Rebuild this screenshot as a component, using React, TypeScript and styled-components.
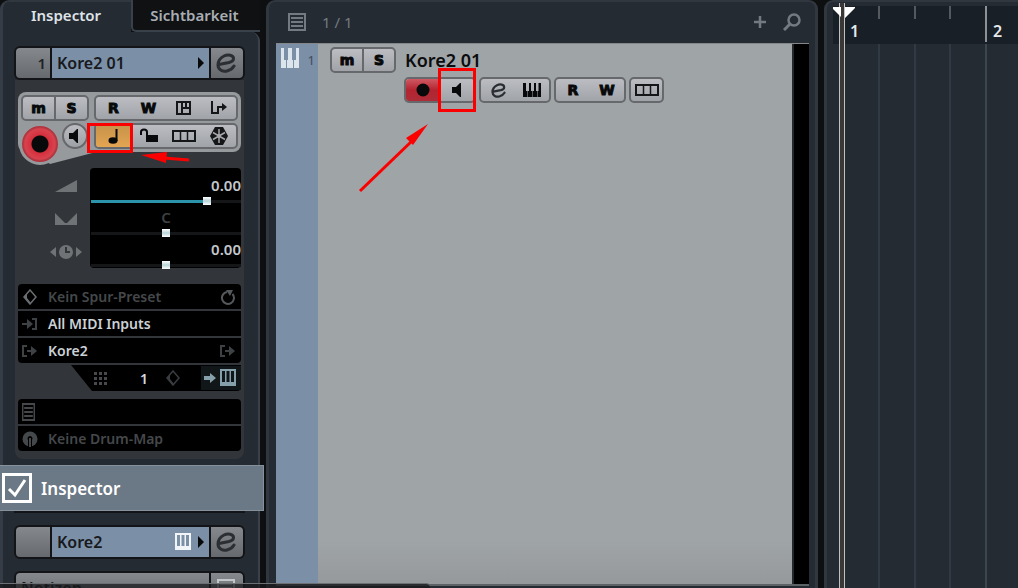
import React from 'react';
import styled, { createGlobalStyle, css } from 'styled-components';

const GlobalStyle = createGlobalStyle`
  *, *::before, *::after { box-sizing: border-box; }
  body {
    margin: 0;
    background: #0d0f10;
    font-family: 'Noto Sans', 'Open Sans', sans-serif;
    color: #d4dae0;
  }
  button, input { font: inherit; color: inherit; margin: 0; padding: 0; }
  button { border: 0; background: none; display: flex; align-items: center; justify-content: center; }
  svg { display: block; flex: none; }
`;

/* ---------- frame ---------- */

const Window = styled.div`
  position: relative;
  display: flex;
  gap: 6px;
  height: 100vh;
  overflow: hidden;
`;

const Sidebar = styled.aside`
  flex: none;
  width: 260px;
  display: flex;
  flex-direction: column;
`;

const Tabs = styled.div`
  display: flex;
  height: 32px;
  flex: none;
`;

const Tab = styled.button<{ $active?: boolean }>`
  height: 32px;
  font-size: 15px;
  font-weight: 600;
  ${(p) =>
    p.$active
      ? css`
          width: 131px;
          padding: 0 2px 4px 0;
          background: #252b33;
          border-top: 2px solid #30373f;
          border-left: 3px solid #353c46;
          border-top-left-radius: 9px;
          color: #dfe3e8;
        `
      : css`
          flex: 1;
          padding-right: 4px;
          border-left: 2px solid #39414a;
          border-bottom: 2px solid #39414a;
          border-bottom-left-radius: 5px;
          background: #0f1112;
          color: #a9aeb5;
        `}
`;

const InspectorPanel = styled.div`
  flex: 1;
  display: flex;
  flex-direction: column;
  padding: 14px 13px 0 11px;
  background: #252b33;
  border-left: 3px solid #353c46;
  border-right: 2px solid #39414a;
  border-top-right-radius: 9px;
`;

/* ---------- title bars ---------- */

const TitleBar = styled.div`
  display: flex;
  flex: none;
  height: 34px;
  border: 2px solid #121417;
  border-radius: 6px;
  overflow: hidden;
  background: #121417;
  gap: 2px;
  color: #17191c;
  font-size: 16px;
  font-weight: 600;
`;

const NotesBar = styled(TitleBar)`
  margin-top: 12px;
`;

const BarCap = styled.button<{ $wide?: boolean }>`
  width: ${(p) => (p.$wide ? 34 : 32)}px;
  justify-content: ${(p) => (p.$wide ? 'flex-end' : 'center')};
  padding-right: ${(p) => (p.$wide ? 4 : 2)}px;
  background: linear-gradient(#85888c, #66696d);
  color: #202327;
  font-size: 15px;
`;

const BarName = styled.button<{ $plain?: boolean }>`
  flex: 1;
  justify-content: space-between;
  padding: 0 4px 0 5px;
  background: ${(p) => (p.$plain ? 'linear-gradient(#85888c, #66696d)' : '#7b8fa7')};
`;

const BarIcons = styled.span`
  display: flex;
  align-items: center;
  gap: 6px;
`;

/* ---------- inspector body ---------- */

const Section = styled.div`
  flex: none;
  display: flex;
  flex-direction: column;
  margin: 0 1px;
  padding: 12px 3px 8px;
  background: #323539;
  border-radius: 0 0 8px 8px;
`;

const Cluster = styled.div`
  position: relative;
  display: grid;
  grid-template-columns: 68px 1fr;
  gap: 2px 5px;
  padding: 3px;
  background: #979a9d;
  border-radius: 8px;
  margin-bottom: 16px;
  &::before {
    content: '';
    position: absolute;
    left: 0;
    top: 40px;
    width: 86px;
    height: 34px;
    background: #979a9d;
    clip-path: polygon(0 0, 100% 0, 100% 18px, 32px 32px, 14px 20px);
  }
`;

const ButtonGroup = styled.div`
  position: relative;
  display: flex;
  height: 26px;
  border: 2px solid #66686c;
  border-radius: 5px;
  background: linear-gradient(#bbbdc2, #a0a3a8);
  overflow: hidden;
`;

const Cell = styled.button<{ $tone?: 'record' | 'accent'; $divided?: boolean }>`
  flex: 1;
  color: #08090a;
  font-family: 'DejaVu Sans', sans-serif;
  font-weight: 700;
  font-size: 14px;
  line-height: 16px;
  -webkit-text-stroke: 1px #08090a;
  ${(p) => p.$divided && css`border-left: 2px solid #66686c;`}
  ${(p) => p.$tone === 'record' && css`background: linear-gradient(#cf5963, #b32430 50%, #ad2d38);`}
  ${(p) => p.$tone === 'accent' && css`background: linear-gradient(#c6924a, #e3a552);`}
`;

const RecordRow = styled.div`
  position: relative;
  display: flex;
  align-items: flex-start;
  gap: 1px;
  height: 26px;
`;

const RecordButton = styled.button`
  flex: none;
  width: 42px;
  height: 42px;
  margin-left: -2px;
  border: 3px solid #979a9d;
  border-radius: 50%;
  background: radial-gradient(circle, #08090a 8px, #d42f3c 9px, #d8434e 15px, #b0353f 17px);
`;

const MonitorButton = styled.button`
  flex: none;
  width: 26px;
  height: 26px;
  padding-right: 2px;
  border: 2px solid #66686c;
  border-radius: 50%;
  background: linear-gradient(#babcc1, #9da0a5);
`;

const Faders = styled.div`
  display: flex;
  margin-bottom: 16px;
`;

const FaderIcons = styled.div`
  width: 72px;
  display: flex;
  flex-direction: column;
  align-items: center;
  padding: 1px 0 0 24px;
`;

const FaderIcon = styled.span`
  display: flex;
  height: 33px;
  align-items: center;
`;

const FaderBox = styled.div`
  flex: 1;
  height: 100px;
  padding: 5px 0 0 1px;
  background: #000;
  border-radius: 4px;
`;

const FaderRow = styled.label<{ $dim?: boolean }>`
  display: flex;
  flex-direction: column;
  height: 32px;
  font-size: 15px;
  font-weight: 600;
  line-height: 24px;
  text-align: ${(p) => (p.$dim ? 'center' : 'right')};
  color: ${(p) => (p.$dim ? '#3d4043' : '#c3c7cc')};
`;

const Slider = styled.input<{ $fill?: boolean }>`
  appearance: none;
  width: 100%;
  height: 8px;
  background: linear-gradient(
      to right,
      ${(p) => (p.$fill ? '#2b93aa' : '#151618')} 78%,
      #151618 78%
    )
    center / 100% 3px no-repeat;
  &::-webkit-slider-thumb {
    appearance: none;
    width: 8px;
    height: 8px;
    background: linear-gradient(#fff, #b9d4d9 50%, #fff);
  }
`;

const Slots = styled.div`
  display: flex;
  flex-direction: column;
  gap: 2px;
  background: #323539;
  border-radius: 4px;
  overflow: hidden;
`;

const Slot = styled.button<{ $dim?: boolean }>`
  height: 25px;
  justify-content: flex-start;
  gap: 10px;
  padding: 0 5px 0 4px;
  background: #000;
  font-size: 14px;
  font-weight: 600;
  color: ${(p) => (p.$dim ? '#45484b' : '#ccd1d6')};
`;

const SlotLabel = styled.span`
  flex: 1;
  text-align: left;
`;

const ChannelRow = styled.div`
  display: flex;
  align-items: center;
  align-self: flex-end;
  width: 170px;
  height: 26px;
  margin: 2px 0 8px;
  padding-left: 23px;
  background: #000;
  border-radius: 0 0 4px 0;
  clip-path: polygon(0 0, 100% 0, 100% 100%, 21px 100%);
  font-size: 14px;
  font-weight: 600;
`;

const ChannelValue = styled.button`
  width: 58px;
  padding-left: 16px;
`;

const ChannelOut = styled.button`
  width: 40px;
  height: 24px;
  margin-left: auto;
  padding-right: 3px;
  gap: 3px;
  background: #111719;
`;

/* ---------- floating section chooser ---------- */

const ChooserSlot = styled.div`
  position: relative;
  flex: none;
  height: 54px;
  margin: 0 0 12px;
  border-bottom: 2px solid #121417;
`;

const Chooser = styled.label`
  position: absolute;
  z-index: 2;
  left: -14px;
  top: 6px;
  width: 264px;
  height: 46px;
  display: flex;
  align-items: center;
  gap: 9px;
  padding-left: 2px;
  background: #6b7885;
  border: 1px solid #85929e;
  border-left: 0;
  color: #fff;
  font-size: 17px;
  font-weight: 600;
`;

const CheckWrap = styled.span`
  display: grid;
  & > * { grid-area: 1 / 1; }
`;

const Check = styled.input`
  appearance: none;
  width: 30px;
  height: 30px;
  border: 3px solid #fff;
`;

/* ---------- track list ---------- */

const TrackPanel = styled.main`
  flex: 0 1 552px;
  display: flex;
  flex-direction: column;
  min-width: 0;
  padding: 0 6px 2px 7px;
  background: #252b33;
  border: solid #30373f;
  border-width: 2px 3px 0 3px;
  border-radius: 9px 9px 0 0;
`;

const TrackHeader = styled.header`
  display: flex;
  align-items: center;
  gap: 16px;
  height: 41px;
  flex: none;
  padding: 0 8px 2px 12px;
  color: #747a81;
  font-size: 15px;
`;

const HeaderSpacer = styled.span`
  flex: 1;
`;

const HeaderButton = styled.button`
  color: #747a81;
`;

const TrackArea = styled.div`
  flex: 1;
  display: flex;
  border-top: 1px solid #83878b;
  border-bottom: 2px solid #5d6267;
`;

const TrackStrip = styled.div`
  display: flex;
  flex: none;
  width: 42px;
  padding: 4px 3px 0 4px;
  justify-content: space-between;
  background: #7b8fa7;
  font-size: 13px;
  line-height: 24px;
  color: #414c5a;
`;

const TrackBody = styled.div`
  flex: 1;
  display: flex;
  align-items: flex-start;
  gap: 8px;
  padding: 3px 0 0 12px;
  background: linear-gradient(#9fa4a7 92%, #96999c);
`;

const TrackGutter = styled.div`
  flex: none;
  width: 17px;
  background: #000;
  border-left: 2px solid #26292c;
`;

const MuteSolo = styled.div`
  flex: none;
  width: 66px;
`;

const TrackMain = styled.div`
  display: flex;
  flex-direction: column;
  gap: 4px;
`;

const TrackName = styled.h1`
  margin: 0;
  padding-left: 1px;
  font-size: 18px;
  line-height: 26px;
  font-weight: 600;
  color: #0b0c0e;
`;

const TrackTools = styled.div`
  display: grid;
  grid-template-columns: 72px 72px 72px 35px;
  gap: 3px;
`;

/* ---------- timeline ---------- */

const Timeline = styled.section`
  position: relative;
  flex: 1 0 194px;
  min-width: 0;
  display: flex;
  flex-direction: column;
  padding: 4px 0 0 6px;
  background: #252b33;
  border: solid #30373f;
  border-width: 2px 0 0 3px;
  border-top-left-radius: 9px;
  overflow: hidden;
`;

const Ruler = styled.div`
  display: flex;
  flex: none;
  height: 38px;
  padding-left: 9px;
  background: #181f27;
  overflow: hidden;
`;

const Lane = styled.div`
  display: flex;
  flex: 1;
  padding-left: 9px;
  overflow: hidden;
`;

const Bar = styled.div`
  position: relative;
  flex: none;
  display: grid;
  grid-template-columns: repeat(4, 1fr);
  width: 143px;
`;

const Tick = styled.span<{ $major?: boolean }>`
  width: 2px;
  height: ${(p) => (p.$major ? 36 : 13)}px;
  background: ${(p) => (p.$major ? '#8d9196' : '#54595f')};
`;

const BarNumber = styled.span`
  position: absolute;
  left: 8px;
  top: 15px;
  font-size: 16px;
  line-height: 20px;
  font-weight: 600;
  color: #e4e8ec;
`;

const GridLine = styled.span<{ $major?: boolean }>`
  width: 2px;
  background: ${(p) => (p.$major ? '#3b464f' : '#313a44')};
`;

const Playhead = styled.div`
  position: absolute;
  left: 12px;
  top: 1px;
  bottom: 0;
  width: 6px;
  border: solid #bfc2c5;
  border-width: 0 1px;
  background: #3a3735;
  & > svg { margin-left: -7px; }
`;

/* ---------- overlays ---------- */

const Marker = styled.div`
  position: absolute;
  border: 3px solid #fb0000;
  pointer-events: none;
`;

const NoteMarker = styled(Marker)`
  left: 87px;
  top: 123px;
  width: 46px;
  height: 30px;
`;

const MonitorMarker = styled(Marker)`
  left: 438px;
  top: 68px;
  width: 38px;
  height: 44px;
`;

const Arrows = styled.svg`
  position: absolute;
  left: 0;
  top: 0;
  pointer-events: none;
`;

const StatusEdge = styled.div`
  position: absolute;
  z-index: 3;
  left: 0;
  bottom: 0;
  width: 430px;
  height: 5px;
  background: rgba(24, 26, 28, 0.75);
  border-top: 1px solid #6d7073;
  border-top-right-radius: 4px;
`;

/* ---------- icons ---------- */

const EditIcon = ({ size = 20 }: { size?: number }) => (
  <svg width={size} height={size} viewBox="0 0 20 20" fill="none" stroke="#2b2e32" strokeWidth="3" strokeLinecap="round">
    <path d="M3 11.500L13 9.500C16 8.800 17.500 7.500 17.500 5.500C17.500 2 12 1 8 3C4 5 2 8 2 12C2 17 7 19 11 18C14 17.300 16.500 15.500 18 13" />
  </svg>
);

const Triangle = () => (
  <svg width="8" height="14" viewBox="0 0 8 14"><path d="M1 1l6 6-6 6z" fill="#08090a" /></svg>
);

const SpeakerIcon = () => (
  <svg width="10" height="14" viewBox="0 0 10 14"><path d="M0 4h4l4-4h1v14H8l-4-4H0z" fill="#08090a" /></svg>
);

const DotIcon = () => (
  <svg width="14" height="14" viewBox="0 0 14 14"><circle cx="7" cy="7" r="6.500" fill="#08090a" /></svg>
);

const LanesIcon = () => (
  <svg width="24" height="12" viewBox="0 0 24 12" fill="none" stroke="#141618" strokeWidth="2">
    <path d="M1 1h22v10H1z" /><path d="M8.500 1v10M15.500 1v10" strokeWidth="1.500" />
  </svg>
);

const PanelsIcon = () => (
  <svg width="16" height="14" viewBox="0 0 16 14" fill="none" stroke="#141618" strokeWidth="2">
    <path d="M1 1h13v12H1zM6 1v12M6 7h8M10 1v6" />
  </svg>
);

const RouteIcon = () => (
  <svg width="16" height="14" viewBox="0 0 16 14" fill="none" stroke="#141618" strokeWidth="2">
    <path d="M1 0v12h6V6h5" /><path d="M11 2l5 4-5 4z" fill="#141618" stroke="none" />
  </svg>
);

const NoteIcon = () => (
  <svg width="12" height="15" viewBox="0 0 12 15"><ellipse cx="5" cy="11.500" rx="4.500" ry="3.200" fill="#08090a" /><path d="M7.500 0h2v12h-2z" fill="#08090a" /></svg>
);

const LockIcon = () => (
  <svg width="20" height="16" viewBox="0 0 20 16"><path d="M7 7h12v7H7z" fill="#08090a" /><path d="M2 7V4c0-3.500 6-3.500 6 0v4" fill="none" stroke="#08090a" strokeWidth="2" /></svg>
);

const FreezeIcon = () => (
  <svg width="20" height="20" viewBox="0 0 20 20">
    <path d="M6 1h8l5 9-5 9H6L1 10z" fill="#141618" />
    <path d="M10 3v14M4 6.500l12 7M16 6.500l-12 7" stroke="#a4a7ab" strokeWidth="1.500" />
    <circle cx="10" cy="10" r="2" fill="#a4a7ab" />
  </svg>
);

const PianoIcon = () => (
  <svg width="20" height="20" viewBox="0 0 20 20" fill="#dce4ec">
    <path d="M1 0h3v12h2v8H1zM8 0h4v12h1v8H7v-8h1zM16 0h3v20h-5v-8h2z" />
  </svg>
);

const KeysIcon = () => (
  <svg width="20" height="14" viewBox="0 0 20 14" fill="#08090a">
    <path d="M1 0h3v8h1v6H1zM7 0h2v8h1v6H5.500V8H7zM12 0h2v8h1v6h-4.500V8H12zM16.500 0H19v14h-3.500V8h1z" />
  </svg>
);

const KeyboardIcon = ({ color, gap }: { color: string; gap: string }) => (
  <svg width="16" height="18" viewBox="0 0 16 18">
    <path d="M0 0h16v17H0z" fill={color} />
    <path d="M2 2h3v11H2zM6.500 2h3v11h-3zM11 2h3v11h-3z" fill={gap} />
  </svg>
);

const VolumeIcon = () => (
  <svg width="22" height="12" viewBox="0 0 22 12"><path d="M0 12L22 0v12z" fill="#707376" /></svg>
);

const PanIcon = () => (
  <svg width="22" height="12" viewBox="0 0 22 12"><path d="M0 0l10 10h2L22 0v12H0z" fill="#707376" /></svg>
);

const DelayIcon = () => (
  <svg width="32" height="14" viewBox="0 0 32 14" fill="#707376">
    <path d="M0 7l6-5v10zM32 7l-6-5v10z" /><circle cx="16" cy="7" r="7" />
    <path d="M16 2v5h4" stroke="#323539" strokeWidth="2" fill="none" />
  </svg>
);

const DiamondIcon = ({ color = '#6b6e71' }: { color?: string }) => (
  <svg width="16" height="16" viewBox="0 0 16 16"><path d="M8 1l6 7-6 7-6-7z" fill="none" stroke={color} strokeWidth="1.500" /><path d="M2 8l3-3v4l4 5-1 1z" fill={color} /></svg>
);

const ReloadIcon = () => (
  <svg width="16" height="16" viewBox="0 0 16 16"><path d="M12.500 5a6 6 0 1 1-5.500-2" fill="none" stroke="#55585b" strokeWidth="2" /><path d="M6 1h7l-3 6z" fill="#55585b" /></svg>
);

const InputIcon = () => (
  <svg width="16" height="14" viewBox="0 0 16 14"><path d="M0 7h6M10 2h4v10h-4" fill="none" stroke="#3e4245" strokeWidth="2" /><path d="M5 2l6 5-6 5z" fill="#3e4245" /></svg>
);

const OutputIcon = () => (
  <svg width="16" height="14" viewBox="0 0 16 14"><path d="M5 2H1v10h4M5 7h6" fill="none" stroke="#3e4245" strokeWidth="2" /><path d="M9 2l6 5-6 5z" fill="#3e4245" /></svg>
);

const DotsIcon = () => (
  <svg width="13" height="13" viewBox="0 0 13 13" fill="#47494c">
    {[0, 5, 10].map((y) => [0, 5, 10].map((x) => <rect key={`${x}-${y}`} x={x} y={y} width="3" height="3" />))}
  </svg>
);

const ArrowIcon = () => (
  <svg width="14" height="12" viewBox="0 0 14 12"><path d="M1 4h6V1l6 5-6 5V8H1z" fill="#86a0ab" /></svg>
);

const ListIcon = ({ width = 18, height = 18, color }: { width?: number; height?: number; color: string }) => (
  <svg width={width} height={height} viewBox="0 0 18 18" preserveAspectRatio="none" fill="none" stroke={color} strokeWidth="2">
    <path d="M1 1h16v16H1zM3 5h12M3 9h12M3 13h12" />
  </svg>
);

const DrumIcon = () => (
  <svg width="16" height="16" viewBox="0 0 16 16"><circle cx="8" cy="8" r="7.500" fill="#45484b" /><path d="M6 16V9a2.500 2.500 0 1 1 4 0v7" fill="#000" /><path d="M8 7v9" stroke="#45484b" strokeWidth="2" /></svg>
);

/* ---------- app ---------- */

const beats = [0, 1, 2, 3];
const bars = [1, 2];

export default function App() {
  return (
    <Window>
      <GlobalStyle />
      <Sidebar>
        <Tabs role="tablist">
          <Tab $active role="tab" aria-selected="true">Inspector</Tab>
          <Tab role="tab" aria-selected="false">Sichtbarkeit</Tab>
        </Tabs>
        <InspectorPanel>
          <TitleBar>
            <BarCap $wide>1</BarCap>
            <BarName>Kore2 01<Triangle /></BarName>
            <BarCap aria-label="Instrument bearbeiten"><EditIcon /></BarCap>
          </TitleBar>
          <Section>
            <Cluster>
              <ButtonGroup>
                <Cell>m</Cell>
                <Cell $divided>S</Cell>
              </ButtonGroup>
              <ButtonGroup>
                <Cell>R</Cell>
                <Cell>W</Cell>
                <Cell aria-label="Channel"><PanelsIcon /></Cell>
                <Cell aria-label="Routing"><RouteIcon /></Cell>
              </ButtonGroup>
              <RecordRow>
                <RecordButton aria-label="Aufnahme" />
                <MonitorButton aria-label="Monitor"><SpeakerIcon /></MonitorButton>
              </RecordRow>
              <ButtonGroup>
                <Cell $tone="accent" aria-label="Zeitbasis"><NoteIcon /></Cell>
                <Cell aria-label="Sperren"><LockIcon /></Cell>
                <Cell aria-label="Spuren"><LanesIcon /></Cell>
                <Cell aria-label="Einfrieren"><FreezeIcon /></Cell>
              </ButtonGroup>
            </Cluster>
            <Faders>
              <FaderIcons>
                <FaderIcon><VolumeIcon /></FaderIcon>
                <FaderIcon><PanIcon /></FaderIcon>
                <FaderIcon><DelayIcon /></FaderIcon>
              </FaderIcons>
              <FaderBox>
                <FaderRow>0.00<Slider type="range" $fill defaultValue={79} /></FaderRow>
                <FaderRow $dim>C<Slider type="range" defaultValue={50} /></FaderRow>
                <FaderRow>0.00<Slider type="range" defaultValue={50} /></FaderRow>
              </FaderBox>
            </Faders>
            <Slots>
              <Slot $dim><DiamondIcon /><SlotLabel>Kein Spur-Preset</SlotLabel><ReloadIcon /></Slot>
              <Slot><InputIcon /><SlotLabel>All MIDI Inputs</SlotLabel></Slot>
              <Slot><OutputIcon /><SlotLabel>Kore2</SlotLabel><OutputIcon /></Slot>
            </Slots>
            <ChannelRow>
              <DotsIcon />
              <ChannelValue>1</ChannelValue>
              <DiamondIcon color="#3a3d40" />
              <ChannelOut aria-label="MIDI">
                <ArrowIcon />
                <KeyboardIcon color="#86a0ab" gap="#111719" />
              </ChannelOut>
            </ChannelRow>
            <Slots>
              <Slot $dim aria-label="Map"><ListIcon width={13} color="#45484b" /></Slot>
              <Slot $dim><DrumIcon /><SlotLabel>Keine Drum-Map</SlotLabel></Slot>
            </Slots>
          </Section>
          <ChooserSlot>
            <Chooser>
              <CheckWrap>
                <Check type="checkbox" defaultChecked />
                <svg width="30" height="30" viewBox="0 0 30 30" fill="none" stroke="#fff" strokeWidth="3">
                  <path d="M7 16l6 6L23 7" />
                </svg>
              </CheckWrap>
              Inspector
            </Chooser>
          </ChooserSlot>
          <TitleBar>
            <BarCap $wide aria-label="Aktivieren" />
            <BarName>
              Kore2
              <BarIcons><KeyboardIcon color="#f2f5f8" gap="#7b8fa7" /><Triangle /></BarIcons>
            </BarName>
            <BarCap aria-label="Instrument bearbeiten"><EditIcon /></BarCap>
          </TitleBar>
          <NotesBar>
            <BarName $plain>Notizen</BarName>
            <BarCap aria-label="Notizen"><ListIcon color="#c4c7ca" /></BarCap>
          </NotesBar>
        </InspectorPanel>
      </Sidebar>

      <TrackPanel>
        <TrackHeader>
          <ListIcon color="#747a81" />
          <span>1 / 1</span>
          <HeaderSpacer />
          <HeaderButton aria-label="Spur hinzufügen">
            <svg width="14" height="14" viewBox="0 0 14 14"><path d="M7 1v12M1 7h12" stroke="currentColor" strokeWidth="2.500" /></svg>
          </HeaderButton>
          <HeaderButton aria-label="Spur suchen">
            <svg width="18" height="18" viewBox="0 0 18 18" fill="none" stroke="currentColor" strokeWidth="2.500">
              <circle cx="11" cy="7" r="5.500" /><path d="M7 11l-6 6" strokeWidth="3" />
            </svg>
          </HeaderButton>
        </TrackHeader>
        <TrackArea>
          <TrackStrip><PianoIcon />1</TrackStrip>
          <TrackBody>
            <MuteSolo>
              <ButtonGroup>
                <Cell>m</Cell>
                <Cell $divided>S</Cell>
              </ButtonGroup>
            </MuteSolo>
            <TrackMain>
              <TrackName>Kore2 01</TrackName>
              <TrackTools>
                <ButtonGroup>
                  <Cell $tone="record" aria-label="Aufnahme"><DotIcon /></Cell>
                  <Cell aria-label="Monitor"><SpeakerIcon /></Cell>
                </ButtonGroup>
                <ButtonGroup>
                  <Cell aria-label="Bearbeiten"><EditIcon size={15} /></Cell>
                  <Cell aria-label="Instrument"><KeysIcon /></Cell>
                </ButtonGroup>
                <ButtonGroup>
                  <Cell>R</Cell>
                  <Cell>W</Cell>
                </ButtonGroup>
                <ButtonGroup>
                  <Cell aria-label="Spuren"><LanesIcon /></Cell>
                </ButtonGroup>
              </TrackTools>
            </TrackMain>
          </TrackBody>
          <TrackGutter />
        </TrackArea>
      </TrackPanel>

      <Timeline>
        <Ruler>
          {bars.map((n) => (
            <Bar key={n}>
              {beats.map((b) => <Tick key={b} $major={b === 0} />)}
              <BarNumber>{n}</BarNumber>
            </Bar>
          ))}
        </Ruler>
        <Lane>
          {bars.map((n) => (
            <Bar key={n}>{beats.map((b) => <GridLine key={b} $major={b === 0} />)}</Bar>
          ))}
        </Lane>
        <Playhead>
          <svg width="22" height="16" viewBox="0 0 22 16"><path d="M0 4h22v1L12 15V4H8v10L0 6z" fill="#fff" /></svg>
        </Playhead>
      </Timeline>

      <NoteMarker />
      <MonitorMarker />
      <Arrows width="500" height="200" viewBox="0 0 500 200" fill="#fb0000">
        <path d="M189 160L164 158" stroke="#fb0000" strokeWidth="3" />
        <path d="M141 155L167 152L166 163z" />
        <path d="M360 191L413 140" stroke="#fb0000" strokeWidth="3" />
        <path d="M428 124L406 138L413 145z" />
      </Arrows>
      <StatusEdge />
    </Window>
  );
}
